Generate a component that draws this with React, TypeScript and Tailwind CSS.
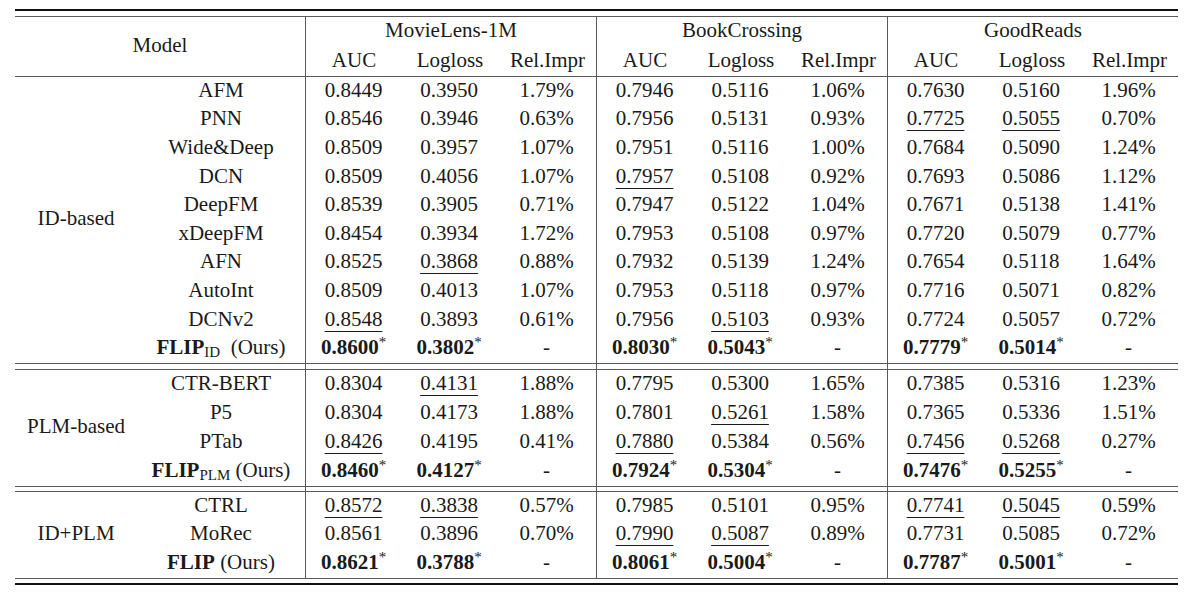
type Row = { name: React.ReactNode; vals: string[] };

const LINE = "border-[#5a5a5a]";
const COLS = "grid grid-cols-[168px_96px_96px_99px_96px_96px_99px_96px_96px_99px]";

function Cell({ v, first }: { v: string; first: boolean }) {
  const under = v.startsWith("_");
  const bold = v.endsWith("*");
  const text = v.replace(/^_/, "").replace(/\*$/, "");
  return (
    <div className={`flex items-center justify-center pb-[2px] ${first ? `border-l ${LINE}` : ""}`}>
      {bold ? (
        <span>
          <span className="font-bold">{text}</span>
          <sup className="text-[15px] -top-[0.45em]">*</sup>
        </span>
      ) : (
        <span className={under ? "underline decoration-1 underline-offset-[5px]" : ""}>{text}</span>
      )}
    </div>
  );
}

function Flip({ sub }: { sub?: string }) {
  return (
    <span>
      <span className="font-bold">FLIP</span>
      {sub && <sub className="text-[15px] -bottom-[0.2em]">{sub}</sub>}
      {sub === "ID" ? "\u00a0\u00a0" : " "}(Ours)
    </span>
  );
}

function Section({ label, rows, rowH }: { label: string; rows: Row[]; rowH: string }) {
  return (
    <div className="flex">
      <div className="w-[122px] flex items-center justify-center pb-[2px]">{label}</div>
      <div className="flex flex-col">
        {rows.map((r, i) => (
          <div key={i} className={`${COLS} ${rowH}`}>
            <div className="flex items-center justify-center pb-[2px]">{r.name}</div>
            {r.vals.map((v, j) => (
              <Cell key={j} v={v} first={j % 3 === 0} />
            ))}
          </div>
        ))}
      </div>
    </div>
  );
}

function Spacer({ h }: { h: string }) {
  return (
    <div className={`flex ${h} border-y ${LINE}`}>
      <div className="w-[122px]" />
      <div className={COLS}>
        {Array.from({ length: 10 }).map((_, i) => (
          <div key={i} className={i === 1 || i === 4 || i === 7 ? `border-l ${LINE}` : ""} />
        ))}
      </div>
    </div>
  );
}

const idRows: Row[] = [
  { name: "AFM", vals: ["0.8449", "0.3950", "1.79%", "0.7946", "0.5116", "1.06%", "0.7630", "0.5160", "1.96%"] },
  { name: "PNN", vals: ["0.8546", "0.3946", "0.63%", "0.7956", "0.5131", "0.93%", "_0.7725", "_0.5055", "0.70%"] },
  { name: "Wide&Deep", vals: ["0.8509", "0.3957", "1.07%", "0.7951", "0.5116", "1.00%", "0.7684", "0.5090", "1.24%"] },
  { name: "DCN", vals: ["0.8509", "0.4056", "1.07%", "_0.7957", "0.5108", "0.92%", "0.7693", "0.5086", "1.12%"] },
  { name: "DeepFM", vals: ["0.8539", "0.3905", "0.71%", "0.7947", "0.5122", "1.04%", "0.7671", "0.5138", "1.41%"] },
  { name: "xDeepFM", vals: ["0.8454", "0.3934", "1.72%", "0.7953", "0.5108", "0.97%", "0.7720", "0.5079", "0.77%"] },
  { name: "AFN", vals: ["0.8525", "_0.3868", "0.88%", "0.7932", "0.5139", "1.24%", "0.7654", "0.5118", "1.64%"] },
  { name: "AutoInt", vals: ["0.8509", "0.4013", "1.07%", "0.7953", "0.5118", "0.97%", "0.7716", "0.5071", "0.82%"] },
  { name: "DCNv2", vals: ["_0.8548", "0.3893", "0.61%", "0.7956", "_0.5103", "0.93%", "0.7724", "0.5057", "0.72%"] },
  { name: <Flip sub="ID" />, vals: ["0.8600*", "0.3802*", "-", "0.8030*", "0.5043*", "-", "0.7779*", "0.5014*", "-"] },
];

const plmRows: Row[] = [
  { name: "CTR-BERT", vals: ["0.8304", "_0.4131", "1.88%", "0.7795", "0.5300", "1.65%", "0.7385", "0.5316", "1.23%"] },
  { name: "P5", vals: ["0.8304", "0.4173", "1.88%", "0.7801", "_0.5261", "1.58%", "0.7365", "0.5336", "1.51%"] },
  { name: "PTab", vals: ["_0.8426", "0.4195", "0.41%", "_0.7880", "0.5384", "0.56%", "_0.7456", "_0.5268", "0.27%"] },
  { name: <Flip sub="PLM" />, vals: ["0.8460*", "0.4127*", "-", "0.7924*", "0.5304*", "-", "0.7476*", "0.5255*", "-"] },
];

const bothRows: Row[] = [
  { name: "CTRL", vals: ["_0.8572", "_0.3838", "0.57%", "0.7985", "0.5101", "0.95%", "_0.7741", "_0.5045", "0.59%"] },
  { name: "MoRec", vals: ["0.8561", "0.3896", "0.70%", "_0.7990", "_0.5087", "0.89%", "0.7731", "0.5085", "0.72%"] },
  { name: <Flip />, vals: ["0.8621*", "0.3788*", "-", "0.8061*", "0.5004*", "-", "0.7787*", "0.5001*", "-"] },
];

export default function App() {
  return (
    <div className="w-[1200px] h-[600px] bg-white pt-[9px] pl-[15px] text-[#1a1a1a] text-[21px] leading-none font-['Liberation_Serif',serif]">
      <div className="w-[1163px]">
        {/* top double rule */}
        <div className="h-[7px] border-t-2 border-[#111]" />
        <div className={`flex border-t border-b ${LINE}`}>
          <div className="w-[290px] h-[59px] flex items-center justify-center pb-[2px]">Model</div>
          {["MovieLens-1M", "BookCrossing", "GoodReads"].map((d) => (
            <div key={d} className={`w-[291px] border-l ${LINE} flex flex-col`}>
              <div className="h-[29px] flex items-center justify-center pb-[2px]">{d}</div>
              <div className="grid grid-cols-[96px_96px_99px] h-[30px]">
                {["AUC", "Logloss", "Rel.Impr"].map((h) => (
                  <div key={h} className="flex items-center justify-center pb-[2px]">{h}</div>
                ))}
              </div>
            </div>
          ))}
        </div>

        <Section label="ID-based" rows={idRows} rowH="h-[28.6px]" />
        <Spacer h="h-[7px]" />
        <Section label="PLM-based" rows={plmRows} rowH="h-[29px]" />
        <Spacer h="h-[6px]" />
        <Section label="ID+PLM" rows={bothRows} rowH="h-[28.67px]" />

        {/* bottom double rule */}
        <div className={`h-[5px] border-t ${LINE}`} />
        <div className="border-t-2 border-[#111]" />
      </div>
    </div>
  );
}
